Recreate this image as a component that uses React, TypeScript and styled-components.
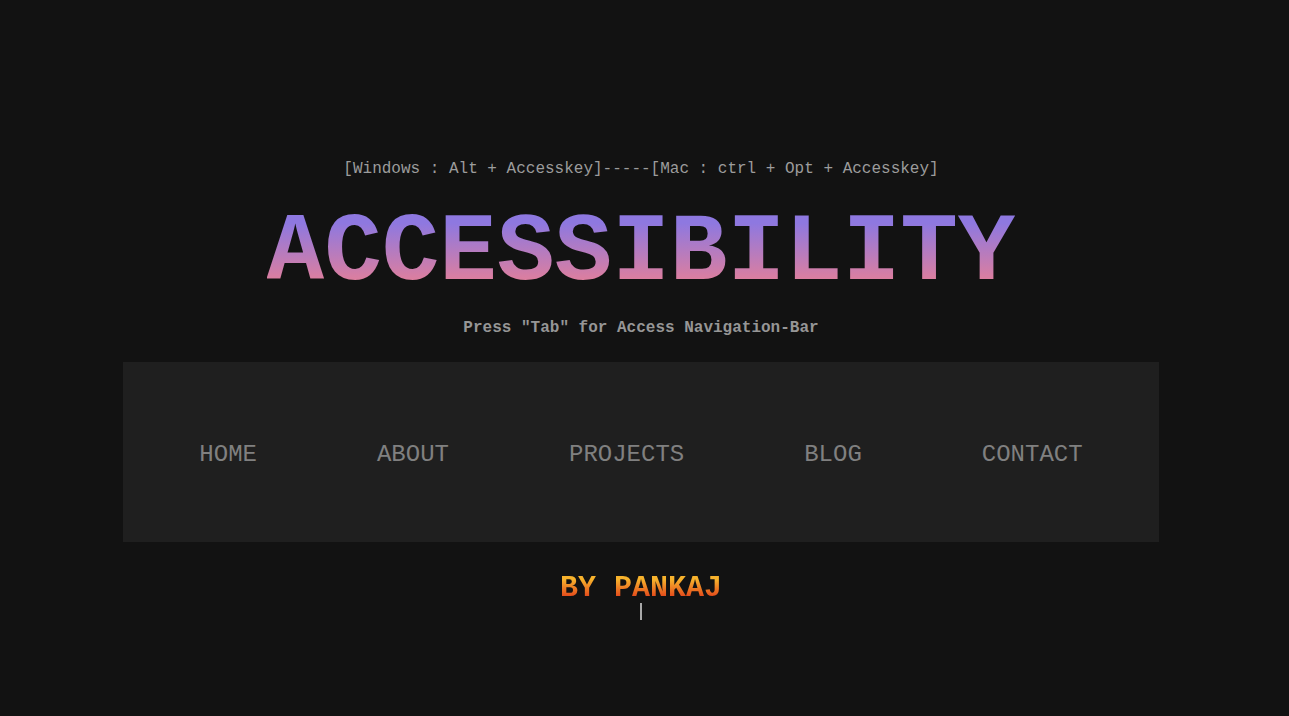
import React from "react";
import styled, { createGlobalStyle } from "styled-components";

const GlobalStyle = createGlobalStyle`
  html, body {
    margin: 0;
    padding: 0;
    background: #121212;
  }
  body {
    font-family: "Liberation Mono", "Courier New", monospace;
  }
`;

const Page = styled.main`
  width: 1282px;
  min-height: 716px;
  display: flex;
  flex-direction: column;
  align-items: center;
  padding-top: 160px;
  box-sizing: border-box;
`;

const Hint = styled.p`
  margin: 0;
  font-family: "Liberation Mono", "Courier New", monospace;
  font-size: 16px;
  line-height: 18px;
  color: #9c9c9c;
  white-space: pre;
`;

const Title = styled.h1`
  margin: 21px 0 0;
  font-family: "Liberation Mono", "Courier New", monospace;
  font-size: 96px;
  font-weight: 700;
  line-height: 109px;
  background: linear-gradient(to bottom, #8e78e0 22%, #e27f9a 78%);
  -webkit-background-clip: text;
  background-clip: text;
  color: transparent;
`;

const SubHint = styled.p`
  margin: 11px 0 0;
  font-family: "Liberation Mono", "Courier New", monospace;
  font-size: 16px;
  font-weight: 700;
  line-height: 18px;
  color: #969696;
  white-space: pre;
`;

const NavBar = styled.nav`
  margin-top: 25px;
  width: 1036px;
  height: 180px;
  padding-top: 6px;
  box-sizing: border-box;
  background: #1f1f1f;
  display: flex;
  align-items: center;
  justify-content: center;
  gap: 120px;
`;

const NavLink = styled.a`
  font-family: "Liberation Mono", "Courier New", monospace;
  font-size: 24px;
  line-height: 28px;
  color: #808080;
  text-decoration: none;
  cursor: pointer;
`;

const Author = styled.h2`
  margin: 29px 0 0;
  font-family: "Liberation Mono", "Courier New", monospace;
  font-size: 30px;
  font-weight: 700;
  line-height: 34px;
  white-space: pre;
  background: linear-gradient(to bottom, #f7b22c 25%, #e2431a 78%);
  -webkit-background-clip: text;
  background-clip: text;
  color: transparent;
`;

const Caret = styled.span`
  display: block;
  margin-top: -2px;
  width: 2px;
  height: 17px;
  background: #a8a8a8;
`;

const links = ["HOME", "ABOUT", "PROJECTS", "BLOG", "CONTACT"];

export default function App() {
  return (
    <>
      <GlobalStyle />
      <Page>
        <Hint>[Windows : Alt + Accesskey]-----[Mac : ctrl + Opt + Accesskey]</Hint>
        <Title>ACCESSIBILITY</Title>
        <SubHint>Press "Tab" for Access Navigation-Bar</SubHint>
        <NavBar>
          {links.map((l) => (
            <NavLink key={l} href="#" accessKey={l[0].toLowerCase()}>
              {l}
            </NavLink>
          ))}
        </NavBar>
        <Author>BY PANKAJ</Author>
        <Caret />
      </Page>
    </>
  );
}
